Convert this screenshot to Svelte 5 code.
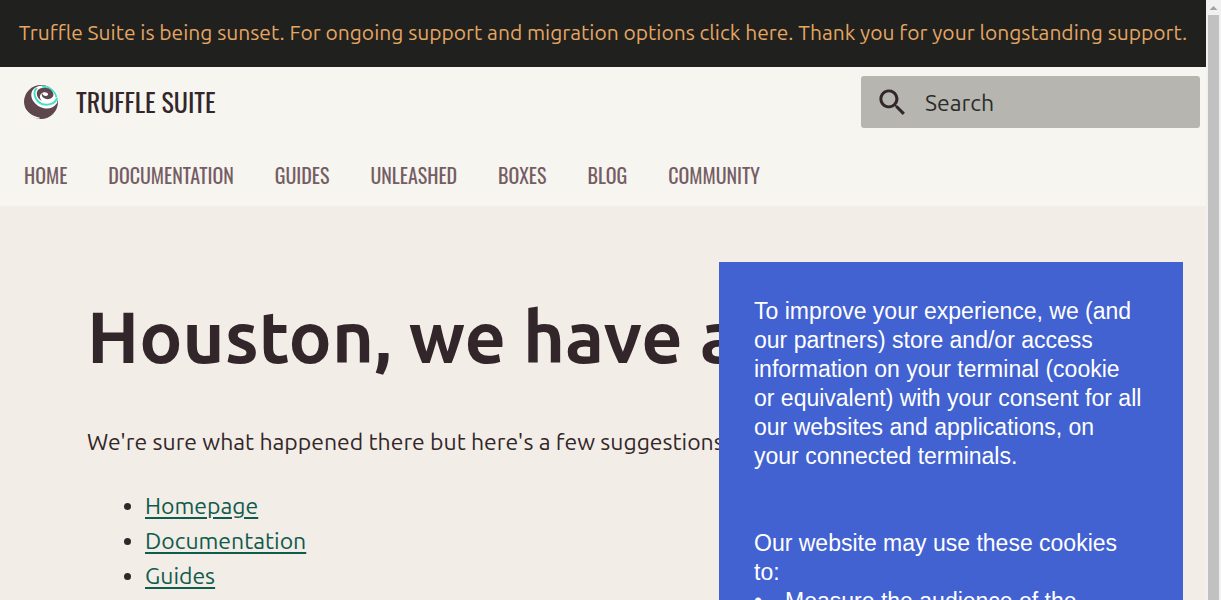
<script>
  const navigation = ['Home', 'Documentation', 'Guides', 'Unleashed', 'Boxes', 'Blog', 'Community'];
  const suggestions = ['Homepage', 'Documentation', 'Guides'];
  let query = $state('');
</script>

<div class="shell">
  <div class="page">
    <a class="banner" href="#sunset">Truffle Suite is being sunset. For ongoing support and migration options click here. Thank you for your longstanding support.</a>

    <header>
      <div class="top">
        <a class="brand" href="#home">
          <svg class="logo" viewBox="0 0 36 36" aria-hidden="true">
            <circle cx="18" cy="18" r="17" fill="#5e464d" />
            <path d="M16 2C8 4 6 12 11 18c6 8 18 9 23 1 1.500-4 1-8-1-11C29 3 23 1 16 2Z" fill="#fff" />
            <path d="M14 4c-5 4-2 13 5 16 7 2 14-1 15-6" fill="none" stroke="#47dfc6" stroke-width="2" />
            <path d="M19 2.500c7 0 13 4 14.500 11" fill="none" stroke="#47dfc6" stroke-width="1.800" />
            <path d="M15 6c3-3 11-3 14 1 4 5-1 9-6 8-3-1-5-3-4-6 1 3 4 4 6 2 1-3-5-4-7-1-2 2-1 5 1 7-4-2-7-7-4-11Z" fill="#5e464d" />
            <path d="M1 20c1 7 8 12.500 16 13.700l-1 1C7 34 1 27 1 20Z" fill="#fff" />
          </svg>
          <span>TRUFFLE SUITE</span>
        </a>
        <label class="search">
          <svg viewBox="0 0 24 24" aria-hidden="true"><path fill="#33262a" d="M9.500 3a6.500 6.500 0 0 1 4.940 10.730l.27.27h.79l5 5-1.500 1.500-5-5v-.79l-.27-.27A6.500 6.500 0 1 1 9.500 3m0 2a4.500 4.500 0 1 0 0 9 4.500 4.500 0 0 0 0-9Z" /></svg>
          <input type="text" placeholder="Search" aria-label="Search" bind:value={query} />
        </label>
      </div>
      <nav>
        {#each navigation as item}
          <a href="#{item.toLowerCase()}">{item.toUpperCase()}</a>
        {/each}
      </nav>
    </header>

    <main>
      <h1>Houston, we have a problem</h1>
      <p>We're sure what happened there but here's a few suggestions:</p>
      <ul>
        {#each suggestions as item}
          <li><a href="#{item.toLowerCase()}">{item}</a></li>
        {/each}
      </ul>
    </main>

    <section class="consent" aria-label="Cookies">
      <p>To improve your experience, we (and our partners) store and/or access information on your terminal (cookie or equivalent) with your consent for all our websites and applications, on your connected terminals.</p>
      <p>Our website may use these cookies to:</p>
      <ul>
        <li>Measure the audience of the</li>
      </ul>
    </section>
  </div>

  <div class="scrollbar" aria-hidden="true">
    <svg viewBox="0 0 15 15"><path d="M3.500 10h8L7.500 6Z" fill="#a3a3a3" /></svg>
    <div class="thumb"></div>
  </div>
</div>

<style>
  :global(body) { margin: 0; overflow: hidden; }

  .shell {
    display: flex;
    height: 100vh;
    overflow: hidden;
    background: #f2ede7;
    color: #33262a;
    font-family: Ubuntu, "Noto Sans", sans-serif;
  }
  .page { flex: 1; min-width: 0; position: relative; overflow: hidden; }

  .banner {
    display: block;
    padding: 17px 0 19px;
    background: #20201e;
    color: #e4a663;
    font-size: 21px;
    line-height: 31px;
    text-align: center;
    text-decoration: none;
    white-space: nowrap;
  }

  header { background: #f6f5f0; font-family: Oswald, "Roboto Condensed", "Liberation Sans Narrow", sans-serif; }
  .top { display: flex; align-items: center; justify-content: space-between; padding: 9px 6px 9px 23px; }
  .brand { display: flex; align-items: center; gap: 17px; color: #33262a; font-size: 26px; line-height: 36px; text-decoration: none; }
  .logo { width: 36px; height: 36px; }
  .search { display: flex; align-items: center; gap: 15px; box-sizing: border-box; width: 339px; max-width: 50%; height: 52px; padding: 0 14px; border-radius: 3px; background: #b6b5b0; }
  .search svg { flex: none; width: 35px; height: 35px; }
  .search input { flex: 1; min-width: 0; padding: 2px 0 0; border: 0; outline: 0; background: none; color: #33262a; font: 23px/34px Ubuntu, "Noto Sans", sans-serif; }
  .search input::placeholder { color: #2c2c2b; opacity: 1; }

  nav { display: flex; gap: 41px; padding: 17px 24px 9px; font-size: 20px; line-height: 43px; }
  nav a { color: #755d63; text-decoration: none; }

  main { padding: 85px 87px 0; font-size: 23px; line-height: 35px; white-space: nowrap; }
  h1 { margin: 0; font-size: 72px; font-weight: 600; line-height: 91px; }
  main p { margin: 42px 0 29px; }
  main ul { margin: 0; padding-left: 58px; }
  main a { color: #0f5b4c; text-decoration-thickness: 2px; text-underline-offset: 3px; }

  .consent {
    position: absolute;
    top: 262px;
    right: 23px;
    box-sizing: border-box;
    width: 464px;
    padding: 35px 40px 35px 35px;
    background: #4262d1;
    color: #fff;
    font: 23px/29px "Liberation Sans", Arial, sans-serif;
  }
  .consent p { margin: 0; }
  .consent p + p { margin-top: 58px; }
  .consent ul { margin: 0; padding: 0; list-style: none; }
  .consent li { display: flex; gap: 23px; }
  .consent li::before { content: "•"; }

  .scrollbar { flex: none; display: flex; flex-direction: column; width: 15px; background: #f1f1f1; }
  .scrollbar svg { display: block; width: 15px; height: 15px; }
  .thumb { flex: 1; margin: 0 2px; background: #c1c1c1; }
</style>
